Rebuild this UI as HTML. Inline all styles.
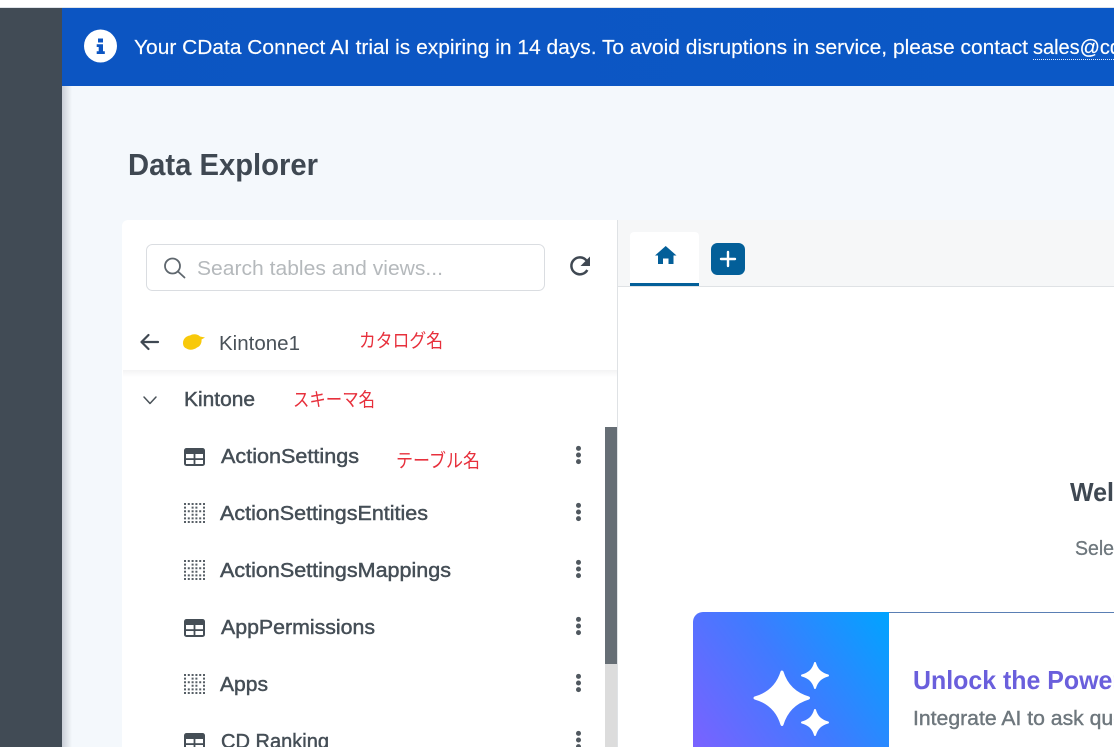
<!DOCTYPE html>
<html lang="en">
<head>
<meta charset="utf-8">
<title>Data Explorer</title>
<style>
html,body{margin:0;padding:0;background:#fff;width:1114px;height:747px;overflow:hidden}
svg{display:block;position:absolute;left:0;top:0}
text{font-family:"Liberation Sans","Noto Sans CJK JP",sans-serif}
.jp{font-family:"Liberation Sans","Noto Sans CJK JP",sans-serif;fill:#e7303c;font-size:19px}
.row{font-size:20px;fill:#454e56;stroke:#454e56;stroke-width:.45px}
.b{fill:#fff;font-size:20px;stroke:#fff;stroke-width:.15px}
</style>
</head>
<body>
<svg width="1114" height="747" viewBox="0 0 1114 747" xmlns="http://www.w3.org/2000/svg">
<defs>
<linearGradient id="ban" x1="0" y1="0" x2="1" y2="0"><stop offset="0" stop-color="#0c55c2"/><stop offset="1" stop-color="#0b58c6"/></linearGradient>
<linearGradient id="shadow" x1="0" y1="0" x2="1" y2="0"><stop offset="0" stop-color="#c9ced6"/><stop offset="1" stop-color="#f4f8fc"/></linearGradient>
<linearGradient id="band" x1="0" y1="0" x2="0" y2="1"><stop offset="0" stop-color="#f3f3f4"/><stop offset="1" stop-color="#ffffff"/></linearGradient>
<linearGradient id="card" gradientUnits="userSpaceOnUse" x1="693" y1="747" x2="889" y2="612"><stop offset="0" stop-color="#7a62ff"/><stop offset=".5" stop-color="#3f7bff"/><stop offset="1" stop-color="#00a4ff"/></linearGradient>
<g id="tbl">
<rect x="0" y="0" width="21" height="18" rx="2.5" fill="#454e56"/>
<rect x="2" y="6" width="7.6" height="4.2" fill="#fff"/><rect x="11.4" y="6" width="7.6" height="4.2" fill="#fff"/>
<rect x="2" y="12" width="7.6" height="4" fill="#fff"/><rect x="11.4" y="12" width="7.6" height="4" fill="#fff"/>
</g>
<path id="rf" d="M0 0h2v2H0zM3.800 0h2v2h-2zM7.600 0h2v2h-2zM11.400 0h2v2h-2zM15.200 0h2v2h-2zM19 0h2v2h-2z"/>
<path id="rp" d="M0 0h2v2H0zM7.600 0h2v2h-2zM11.400 0h2v2h-2zM19 0h2v2h-2z"/>
<g id="view" fill="#565e65">
<use href="#rf" y="0"/>
<use href="#rp" y="3.600"/>
<use href="#rf" y="7.200"/>
<use href="#rp" y="10.800"/>
<use href="#rf" y="14.400"/>
<use href="#rf" y="18"/>
</g>
<g id="dots" fill="#50585f"><circle cx="0" cy="-6.600" r="2.500"/><circle cx="0" cy="0" r="2.500"/><circle cx="0" cy="6.600" r="2.500"/></g>
</defs>

<!-- page base -->
<rect width="1114" height="747" fill="#f4f8fc"/>
<rect width="1114" height="8" fill="#fff"/>
<rect y="7" width="1114" height="1" fill="#dfe3e8"/>
<rect y="8" width="62" height="739" fill="#414b55"/>
<rect x="62" y="86" width="10" height="661" fill="url(#shadow)"/>

<!-- banner -->
<rect x="62" y="8" width="1052" height="78" fill="url(#ban)"/>
<circle cx="100.500" cy="46" r="16.500" fill="#fff"/>
<path d="M98 38.500h5v4h-5zM96.700 44.300h6.300v7h1.800v2.700h-8.100v-2.700h2v-4.300h-2z" fill="#0c55c2"/>
<text class="b" x="134" y="54" textLength="894" lengthAdjust="spacingAndGlyphs">Your CData Connect AI trial is expiring in 14 days. To avoid disruptions in service, please contact</text>
<text class="b" x="1033" y="54" textLength="88" lengthAdjust="spacingAndGlyphs">sales@cd</text>
<line x1="1033" y1="59.500" x2="1114" y2="59.500" stroke="#dce8ff" stroke-width="1" stroke-dasharray="1 1"/>

<!-- title -->
<text x="128" y="175" font-size="31" font-weight="700" fill="#3f4852" textLength="190" lengthAdjust="spacingAndGlyphs">Data Explorer</text>

<!-- left panel -->
<path d="M122 747V226a6 6 0 0 1 6-6H617V747z" fill="#fff"/>
<rect x="617" y="220" width="1" height="527" fill="#dfe2e5"/>

<!-- search -->
<rect x="146.500" y="244.500" width="398" height="46" rx="6" fill="#fff" stroke="#dadde1"/>
<circle cx="172.500" cy="266" r="7.500" fill="none" stroke="#5f676e" stroke-width="1.800"/>
<line x1="178" y1="271.500" x2="184.500" y2="277.500" stroke="#5f676e" stroke-width="1.800" stroke-linecap="round"/>
<text x="197" y="275" font-size="20" fill="#b5b9bc" textLength="246" lengthAdjust="spacingAndGlyphs">Search tables and views...</text>

<!-- refresh -->
<path d="M586.500 260.500A8.500 8.500 0 1 0 587.300 270" fill="none" stroke="#3f4852" stroke-width="2.500"/>
<path d="M590 256.500v9.500h-9.500z" fill="#3f4852"/>

<!-- catalog row -->
<path d="M158 342H141.500M148.500 335L141.500 342L148.500 349" fill="none" stroke="#3f4852" stroke-width="2.200" stroke-linecap="round" stroke-linejoin="round"/>
<path d="M183 343C183 339 186 336 190 335.500C193 333.500 198 334 200 336.500L205 337.500L201.500 339.500C202 343 200 346.500 197 347.500C194 350 189 350.500 186.500 348.500C184 347.500 183 345.500 183 343Z" fill="#f8c90a"/>
<text x="219" y="350" font-size="20" fill="#4a5259" textLength="81" lengthAdjust="spacingAndGlyphs">Kintone1</text>
<text class="jp" x="359" y="347" textLength="84" lengthAdjust="spacingAndGlyphs">カタログ名</text>
<rect x="123" y="370" width="494" height="7" fill="url(#band)"/>

<!-- schema row -->
<path d="M144 397L150 403.500L156 397" fill="none" stroke="#4a5259" stroke-width="1.500" stroke-linecap="round" stroke-linejoin="round"/>
<text class="row" x="184" y="406" textLength="71" lengthAdjust="spacingAndGlyphs">Kintone</text>
<text class="jp" x="293" y="406" textLength="82" lengthAdjust="spacingAndGlyphs">スキーマ名</text>

<!-- scrollbar -->
<rect x="605" y="427" width="12" height="320" fill="#dcdcdc"/>
<rect x="605" y="427" width="12" height="237" fill="#666e75"/>

<!-- rows -->
<use href="#tbl" x="184" y="448"/>
<text class="row" x="221" y="463" textLength="138" lengthAdjust="spacingAndGlyphs">ActionSettings</text>
<text class="jp" x="396" y="467" textLength="84" lengthAdjust="spacingAndGlyphs">テーブル名</text>
<use href="#dots" x="578.500" y="455"/>

<use href="#view" x="184" y="503"/>
<text class="row" x="220" y="520" textLength="208" lengthAdjust="spacingAndGlyphs">ActionSettingsEntities</text>
<use href="#dots" x="578.500" y="512"/>

<use href="#view" x="184" y="560"/>
<text class="row" x="220" y="577" textLength="231" lengthAdjust="spacingAndGlyphs">ActionSettingsMappings</text>
<use href="#dots" x="578.500" y="569"/>

<use href="#tbl" x="184" y="619"/>
<text class="row" x="221" y="634" textLength="154" lengthAdjust="spacingAndGlyphs">AppPermissions</text>
<use href="#dots" x="578.500" y="626"/>

<use href="#view" x="184" y="674"/>
<text class="row" x="220" y="691" textLength="48" lengthAdjust="spacingAndGlyphs">Apps</text>
<use href="#dots" x="578.500" y="683"/>

<use href="#tbl" x="184" y="733"/>
<text class="row" x="221" y="748" textLength="108" lengthAdjust="spacingAndGlyphs">CD Ranking</text>
<use href="#dots" x="578.500" y="740"/>

<!-- right panel -->
<rect x="618" y="220" width="496" height="66" fill="#f6f7f8"/>
<rect x="618" y="287" width="496" height="460" fill="#fff"/>
<rect x="618" y="286" width="496" height="1" fill="#dfe2e5"/>
<path d="M630 283V236a4 4 0 0 1 4-4h61a4 4 0 0 1 4 4v47z" fill="#fff"/>
<rect x="630" y="283" width="69" height="3" fill="#035f99"/>
<path d="M665.700 246L676.500 255.500H673.500V264H668.500V258.500H663V264H658V255.500H655z" fill="#035f99"/>
<rect x="711" y="243" width="34" height="32" rx="6.500" fill="#035f99"/>
<path d="M728 252V266M721 259H735" stroke="#fff" stroke-width="2.400" stroke-linecap="round"/>

<!-- welcome -->
<text x="1070" y="501" font-size="26" font-weight="700" fill="#3f4852" textLength="44" lengthAdjust="spacingAndGlyphs">Wel</text>
<text x="1075" y="555" font-size="20" fill="#6e777d" stroke="#6e777d" stroke-width=".3" textLength="39" lengthAdjust="spacingAndGlyphs">Sele</text>

<!-- AI card -->
<rect x="889" y="612" width="225" height="1" fill="#5a7fb4"/>
<path d="M693 747V622a10 10 0 0 1 10-10H889V747z" fill="url(#card)"/>
<path d="M782 672C786 685 795 694 808.500 698C795 702 786 711 782 724.500C778 711 769 702 755 698C769 694 778 685 782 672Z" fill="#fff" stroke="#fff" stroke-width="3" stroke-linejoin="round"/>
<path d="M815 663C817 670 821 673.500 828 675.500C821 677.500 817 681 815 688C813 681 809 677.500 802 675.500C809 673.500 813 670 815 663Z" fill="#fff" stroke="#fff" stroke-width="2" stroke-linejoin="round"/>
<path d="M815 710C817 717 821 720.500 828 722.500C821 724.500 817 728 815 735C813 728 809 724.500 802 722.500C809 720.500 813 717 815 710Z" fill="#fff" stroke="#fff" stroke-width="2" stroke-linejoin="round"/>
<text x="913" y="689" font-size="26" font-weight="700" fill="#6a5fdc" textLength="209" lengthAdjust="spacingAndGlyphs">Unlock the Power</text>
<text x="913" y="725" font-size="20" fill="#6e777d" stroke="#6e777d" stroke-width=".4" textLength="212" lengthAdjust="spacingAndGlyphs">Integrate AI to ask que</text>
</svg>
</body>
</html>
